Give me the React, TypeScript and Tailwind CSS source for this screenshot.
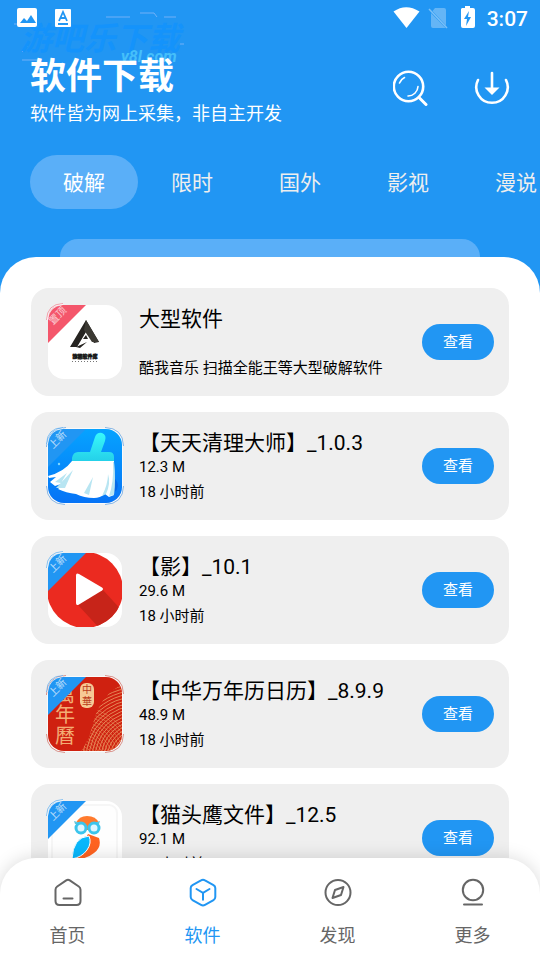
import type { ReactNode } from "react";

type AppEntry = {
  title: string;
  size?: string;
  note: string;
  ribbon: string;
  ribbonColor: string;
  haloColor: string;
  icon: ReactNode;
};

const SoftwareLibraryIcon = () => (
  <>
    <rect width="74" height="74" fill="#fff" />
    <path d="M38 15 22 42h7l9-15 8 11 5-1z" fill="#262421" />
    <path d="M38 15 51 37h-7l-8-12z" fill="#3b3933" />
    <path d="m28 42 11-5-7 6zM35 34l3-4 2 4z" fill="#262421" />
    <text x="37" y="53" textAnchor="middle" fontSize="5" fontWeight="900" fill="#111" stroke="#111" strokeWidth="0.4">猕猴软件库</text>
    <path d="M24 56.500h26" stroke="#777" strokeWidth="1" strokeDasharray="1 2" />
  </>
);

const BroomIcon = () => (
  <>
    <defs>
      <linearGradient id="broomSky" x1="0" y1="0" x2="0" y2="1">
        <stop stopColor="#06a3ff" />
        <stop offset="1" stopColor="#0673f6" />
      </linearGradient>
      <linearGradient id="broomHandle" x1="0" y1="0" x2="0" y2="1">
        <stop stopColor="#38f8fb" />
        <stop offset="1" stopColor="#24cfe8" />
      </linearGradient>
    </defs>
    <rect width="74" height="74" fill="url(#broomSky)" />
    <path d="M60 45q14 7 8 17L48 68z" fill="#0659d8" opacity="0.55" />
    <path d="M47 8q2-5 7-4 5 2 3 8l-4 11h8q5 0 5 5v5H24v-4q1-6 6-6h12z" fill="url(#broomHandle)" />
    <path d="M24 32h42q1 17 0 34l-5 2-4-3q-5 4-11 4-10 0-18-4-10-1-18-5l6-6-9 3-5-4 6-5-7 1-1-2q16-4 24-15z" fill="#fff" />
    <path d="m8 59 17-18-8 18zm28 5 9-16-4 18zm18 3q6-12 6-22 3 9-2 20zM7 53l12-9-6 10zM61 67q5-14 4-34h1q2 18 0 33z" fill="#b8e5f2" />
    <circle cx="11" cy="35" r="1.200" fill="#7fd8ff" />
  </>
);

const PlayIcon = () => (
  <>
    <defs>
      <clipPath id="playDisc">
        <circle cx="37" cy="37" r="38" />
      </clipPath>
    </defs>
    <rect width="74" height="74" fill="#fff" />
    <g clipPath="url(#playDisc)">
      <rect x="-2" y="-2" width="78" height="78" fill="#eb2a20" />
      <path d="M30 52 55 37 78 62 60 78H54z" fill="#c72419" />
    </g>
    <path d="M28 22.500q0-3 3-1.500l23 13.500q2 1.500 0 3L31 51.500q-3 1.500-3-1.500z" fill="#fff" />
  </>
);

const CalendarIcon = () => (
  <>
    <defs>
      <clipPath id="calendarHill">
        <path d="M33 74C41 64 44 50 47 40 52 24 62 13 74 8V74z" />
      </clipPath>
    </defs>
    <rect width="74" height="74" fill="#cf2110" />
    <g clipPath="url(#calendarHill)" fill="none" stroke="#e8935f" strokeWidth="0.900">
      {Array.from({ length: 25 }, (_, i) => (
        <circle key={`a${i}`} cx="92" cy="82" r={12 + i * 3} />
      ))}
      {Array.from({ length: 18 }, (_, i) => (
        <circle key={`b${i}`} cx="28" cy="88" r={8 + i * 3} opacity="0.6" />
      ))}
    </g>
    <rect x="32" y="6" width="14" height="25" rx="6" fill="#f6c995" />
    <text x="39" y="16" textAnchor="middle" fontSize="10" fill="#b93a1b">中</text>
    <text x="39" y="28" textAnchor="middle" fontSize="10" fill="#b93a1b">華</text>
    <g fontSize="20" fill="#f3ad75" textAnchor="middle">
      <text x="17" y="25">萬</text>
      <text x="17" y="45">年</text>
      <text x="17" y="66">曆</text>
    </g>
  </>
);

const OwlIcon = () => (
  <>
    <rect width="74" height="74" fill="#fff" />
    <rect x="4" y="4" width="65" height="74" rx="8" fill="#fefefe" stroke="#f6f6f6" strokeWidth="2" />
    <path d="M28 22q3-7 11-7 9 0 12 7l-5 7H32z" fill="#ff7a2d" />
    <path d="m40 33 11 4q3 9-5 15-7 6-21 7z" fill="#ff6320" />
    <path d="M41 35q3 7-2 14-5 7-15 9 1-22 17-23z" fill="#09b8fc" stroke="#fff" strokeWidth="1" />
    <path d="m26 20 10 3h6l10-3-1 3H27z" fill="#5fc5dc" />
    <g fill="#dff6ff" stroke="#3cc4ec" strokeWidth="3">
      <circle cx="33" cy="27" r="5" />
      <circle cx="46" cy="27" r="5" />
    </g>
  </>
);

const apps: AppEntry[] = [
  { title: "大型软件", note: "酷我音乐 扫描全能王等大型破解软件", ribbon: "置顶", ribbonColor: "#f4566b", haloColor: "none", icon: <SoftwareLibraryIcon /> },
  { title: "【天天清理大师】_1.0.3", size: "12.3 M", note: "18 小时前", ribbon: "上新", ribbonColor: "#2196f3", haloColor: "#5a9ce0", icon: <BroomIcon /> },
  { title: "【影】_10.1", size: "29.6 M", note: "18 小时前", ribbon: "上新", ribbonColor: "#2196f3", haloColor: "none", icon: <PlayIcon /> },
  { title: "【中华万年历日历】_8.9.9", size: "48.9 M", note: "18 小时前", ribbon: "上新", ribbonColor: "#2196f3", haloColor: "#cf6a60", icon: <CalendarIcon /> },
  { title: "【猫头鹰文件】_12.5", size: "92.1 M", note: "18 小时前", ribbon: "上新", ribbonColor: "#2196f3", haloColor: "none", icon: <OwlIcon /> },
];

function AppIcon({ app, index }: { app: AppEntry; index: number }) {
  return (
    <svg viewBox="0 0 74 74" className="size-[74px] shrink-0 overflow-visible" aria-hidden="true">
      <clipPath id={`tile${index}`}>
        <rect width="74" height="74" rx="16" />
      </clipPath>
      {app.haloColor !== "none" && (
        <>
          <rect x="-1" y="-1" width="76" height="76" rx="17" fill="#fafafa" />
          <path
            d="M-1.500 18V17Q0-1 18-1.500M57-1.500Q75-1 75.500 17M75.500 57Q75 75 57 75.500M17 75.500Q-1 75-1.500 57"
            fill="none"
            stroke={app.haloColor}
            opacity="0.7"
          />
        </>
      )}
      <g clipPath={`url(#tile${index})`}>{app.icon}</g>
      <path d="M0 38V14Q1 1 14 0H38z" fill={app.ribbonColor} />
      <path d="M-1.500 15Q-1-1 15-1.500" fill="none" stroke={app.ribbonColor} opacity="0.5" />
      <path d="M-.5 15Q1 1 15-.5" fill="none" stroke="#fff" opacity="0.7" />
      <text x="10" y="14" textAnchor="middle" fontSize="10" fill="#fff" opacity="0.7" transform="rotate(-45 10 11)">{app.ribbon}</text>
    </svg>
  );
}

const SearchIcon = () => (
  <svg viewBox="0 0 36 36" className="size-9" fill="none" stroke="currentColor" strokeLinecap="round">
    <circle cx="15.500" cy="16.500" r="14.700" strokeWidth="2.600" />
    <path d="m26.500 28 6.500 6.500" strokeWidth="3" />
    <path d="M6.500 13a10 10 0 0 1 5-5.500M25 16.500a10 10 0 0 1-10 9.500" strokeWidth="1.600" />
  </svg>
);

const DownloadIcon = () => (
  <svg viewBox="0 0 36 36" className="size-9" fill="none" stroke="currentColor" strokeLinecap="round">
    <path d="M4 10a15.700 15.700 0 1 0 28 0" strokeWidth="2.600" />
    <path d="M18 3v16" strokeWidth="2.600" />
    <path d="M10.500 17.500h15L18 25z" fill="currentColor" stroke="none" />
  </svg>
);

const navIcon = "size-[30px]";
const navItems = [
  {
    label: "首页",
    icon: (
      <svg viewBox="0 0 30 30" className={navIcon} fill="none" stroke="currentColor" strokeWidth="2" strokeLinejoin="round" strokeLinecap="round">
        <path d="M13.200 2.400q1.800-1.200 3.600 0l9 6.100q1.700 1.200 1.700 3.200v11.300q0 4-4 4h-17q-4 0-4-4V11.700q0-2 1.700-3.200z" />
        <path d="M10.500 20.500h9" />
      </svg>
    ),
  },
  {
    label: "软件",
    icon: (
      <svg viewBox="0 0 30 30" className={navIcon} fill="none" stroke="currentColor" strokeWidth="2" strokeLinejoin="round" strokeLinecap="round">
        <path d="M13 2.400q2-1.200 4 0l8.500 4.700q1.800 1 1.800 3v9q0 2-1.800 3L17 26.800q-2 1.200-4 0l-8.500-4.700q-1.800-1-1.800-3v-9q0-2 1.800-3z" />
        <path d="m8.500 11 6.500 3.800 6.500-3.800M15 14.800v7" />
      </svg>
    ),
  },
  {
    label: "发现",
    icon: (
      <svg viewBox="0 0 30 30" className={navIcon} fill="none" stroke="currentColor" strokeWidth="2" strokeLinejoin="round">
        <circle cx="15" cy="14.500" r="12.500" />
        <path d="m20.500 9-2.500 8-8.500 3 2.500-8z" />
      </svg>
    ),
  },
  {
    label: "更多",
    icon: (
      <svg viewBox="0 0 30 30" className={navIcon} fill="none" stroke="currentColor" strokeWidth="2" strokeLinecap="round">
        <circle cx="15" cy="12" r="10.200" />
        <path d="M6 26.500h18" />
      </svg>
    ),
  },
];

const tabs = ["破解", "限时", "国外", "影视", "漫说"];

function StatusBar() {
  return (
    <div className="flex h-9 items-center px-3">
      <svg viewBox="0 0 60 24" className="mr-auto ml-1 h-6 w-[60px]" aria-hidden="true">
        <path d="M3 2h16q2 0 2 2v15q0 2-2 2H3q-2 0-2-2V4q0-2 2-2z" fill="#fff" />
        <path d="m4 17 4-5 3 3 4-6 5 8z" fill="#2196f3" />
        <rect x="39" y="3" width="16" height="18" rx="1" fill="#fff" />
        <path d="m43 15 4-9 4 9m-6.500-3h5M42 18h10" fill="none" stroke="#2196f3" strokeWidth="1.800" />
      </svg>
      <svg viewBox="0 0 84 24" className="mr-[10px] h-6 w-[84px]" aria-hidden="true">
        <path d="M.5 5.500Q13-3 26.500 5.500L13.500 22z" fill="#fff" />
        <path d="M42 2h9q2 0 2 2v15.500L39.500 5zM38 7l14.500 15H40q-2 0-2-2z" fill="#fff" opacity="0.3" />
        <path d="m36 3 18 19" stroke="#fff" strokeWidth="1.500" opacity="0.4" />
        <path d="M69 2h3V0h5v2h3q2 0 2 2v16q0 2-2 2H70q-2 0-2-2V3z" fill="#fff" />
        <path d="m76 5-5 8h3l-1 7 5-9h-3z" fill="#2196f3" />
      </svg>
      <span className="pt-0.5 text-[21px] leading-6 font-medium">3:07</span>
    </div>
  );
}

function Watermark() {
  return (
    <svg viewBox="0 0 176 60" className="pointer-events-none absolute top-2 left-3 h-[60px] w-44" aria-hidden="true">
      <g fill="none" stroke="#b4c8fb" strokeWidth="0.800" opacity="0.7">
        <path d="M2 16h9M94 9h24M128 5h14l3 4M152 9h12M10 44l6-6M10 52h16M168 36h4" />
      </g>
      <text x="8" y="42" fontSize="32" fontWeight="700" fontStyle="italic" fill="#1493fb">游吧乐下载</text>
      <text x="109" y="54" fontSize="16" fontWeight="700" fontStyle="italic" fill="#45bffa">y8l.com</text>
    </svg>
  );
}

export default function App() {
  return (
    <div className="relative flex h-screen flex-col overflow-hidden bg-[#2196f3] font-[Roboto,'Noto_Sans_CJK_SC',sans-serif] text-white">
      <Watermark />
      <header className="relative shrink-0">
        <StatusBar />
        <div className="flex items-start justify-between px-[30px] pt-5">
          <div>
            <h1 className="text-4xl leading-[42px] font-bold">软件下载</h1>
            <p className="mt-1 text-lg leading-6">软件皆为网上采集，非自主开发</p>
          </div>
          <div className="flex gap-[45px] pt-[14px]">
            <button type="button" aria-label="搜索"><SearchIcon /></button>
            <button type="button" aria-label="下载"><DownloadIcon /></button>
          </div>
        </div>
        <div className="mt-[29px] flex overflow-hidden pl-[30px]">
          {tabs.map((tab, i) => (
            <button
              key={tab}
              type="button"
              className={`h-[54px] w-[108px] shrink-0 rounded-full pt-1 text-[21px] ${i === 0 ? "bg-[#5aaff8] text-white" : "text-[#eeeeee]"}`}
            >
              {tab}
            </button>
          ))}
        </div>
        <div className="mx-[60px] mt-[30px] h-[18px] rounded-t-[18px] bg-[#5aaff8]" />
      </header>

      <div className="relative flex min-h-0 flex-1 flex-col overflow-hidden rounded-t-[36px] bg-white text-black">
        <main className="min-h-0 flex-1 overflow-y-auto px-[31px] pt-[31px] [scrollbar-width:none]">
          <ul className="flex flex-col gap-4">
            {apps.map((app, i) => (
              <li key={app.title} className="flex items-start gap-[17px] rounded-[18px] bg-[#efefef] py-[17px] pr-[15px] pl-[17px]">
                <AppIcon app={app} index={i} />
                <div className="flex h-[73px] min-w-0 flex-1 flex-col justify-between text-[15px] leading-5">
                  <div>
                    <h2 className="truncate text-[21px] leading-7">{app.title}</h2>
                    {app.size && <p>{app.size}</p>}
                  </div>
                  <p className="truncate">{app.note}</p>
                </div>
                <button type="button" className="h-9 w-[72px] shrink-0 self-center rounded-full bg-[#2196f3] text-[15px] text-white">
                  查看
                </button>
              </li>
            ))}
          </ul>
        </main>
        <nav className="z-10 flex h-[102px] shrink-0 rounded-t-[36px] bg-white shadow-[0_0_18px_rgba(0,0,0,0.15)]">
          {navItems.map((item) => (
            <a
              key={item.label}
              href="#"
              className={`flex flex-1 flex-col items-center gap-4 pt-5 text-lg leading-6 ${item.label === "软件" ? "text-[#2196f3]" : "text-[#666666]"}`}
            >
              {item.icon}
              {item.label}
            </a>
          ))}
        </nav>
      </div>
    </div>
  );
}
